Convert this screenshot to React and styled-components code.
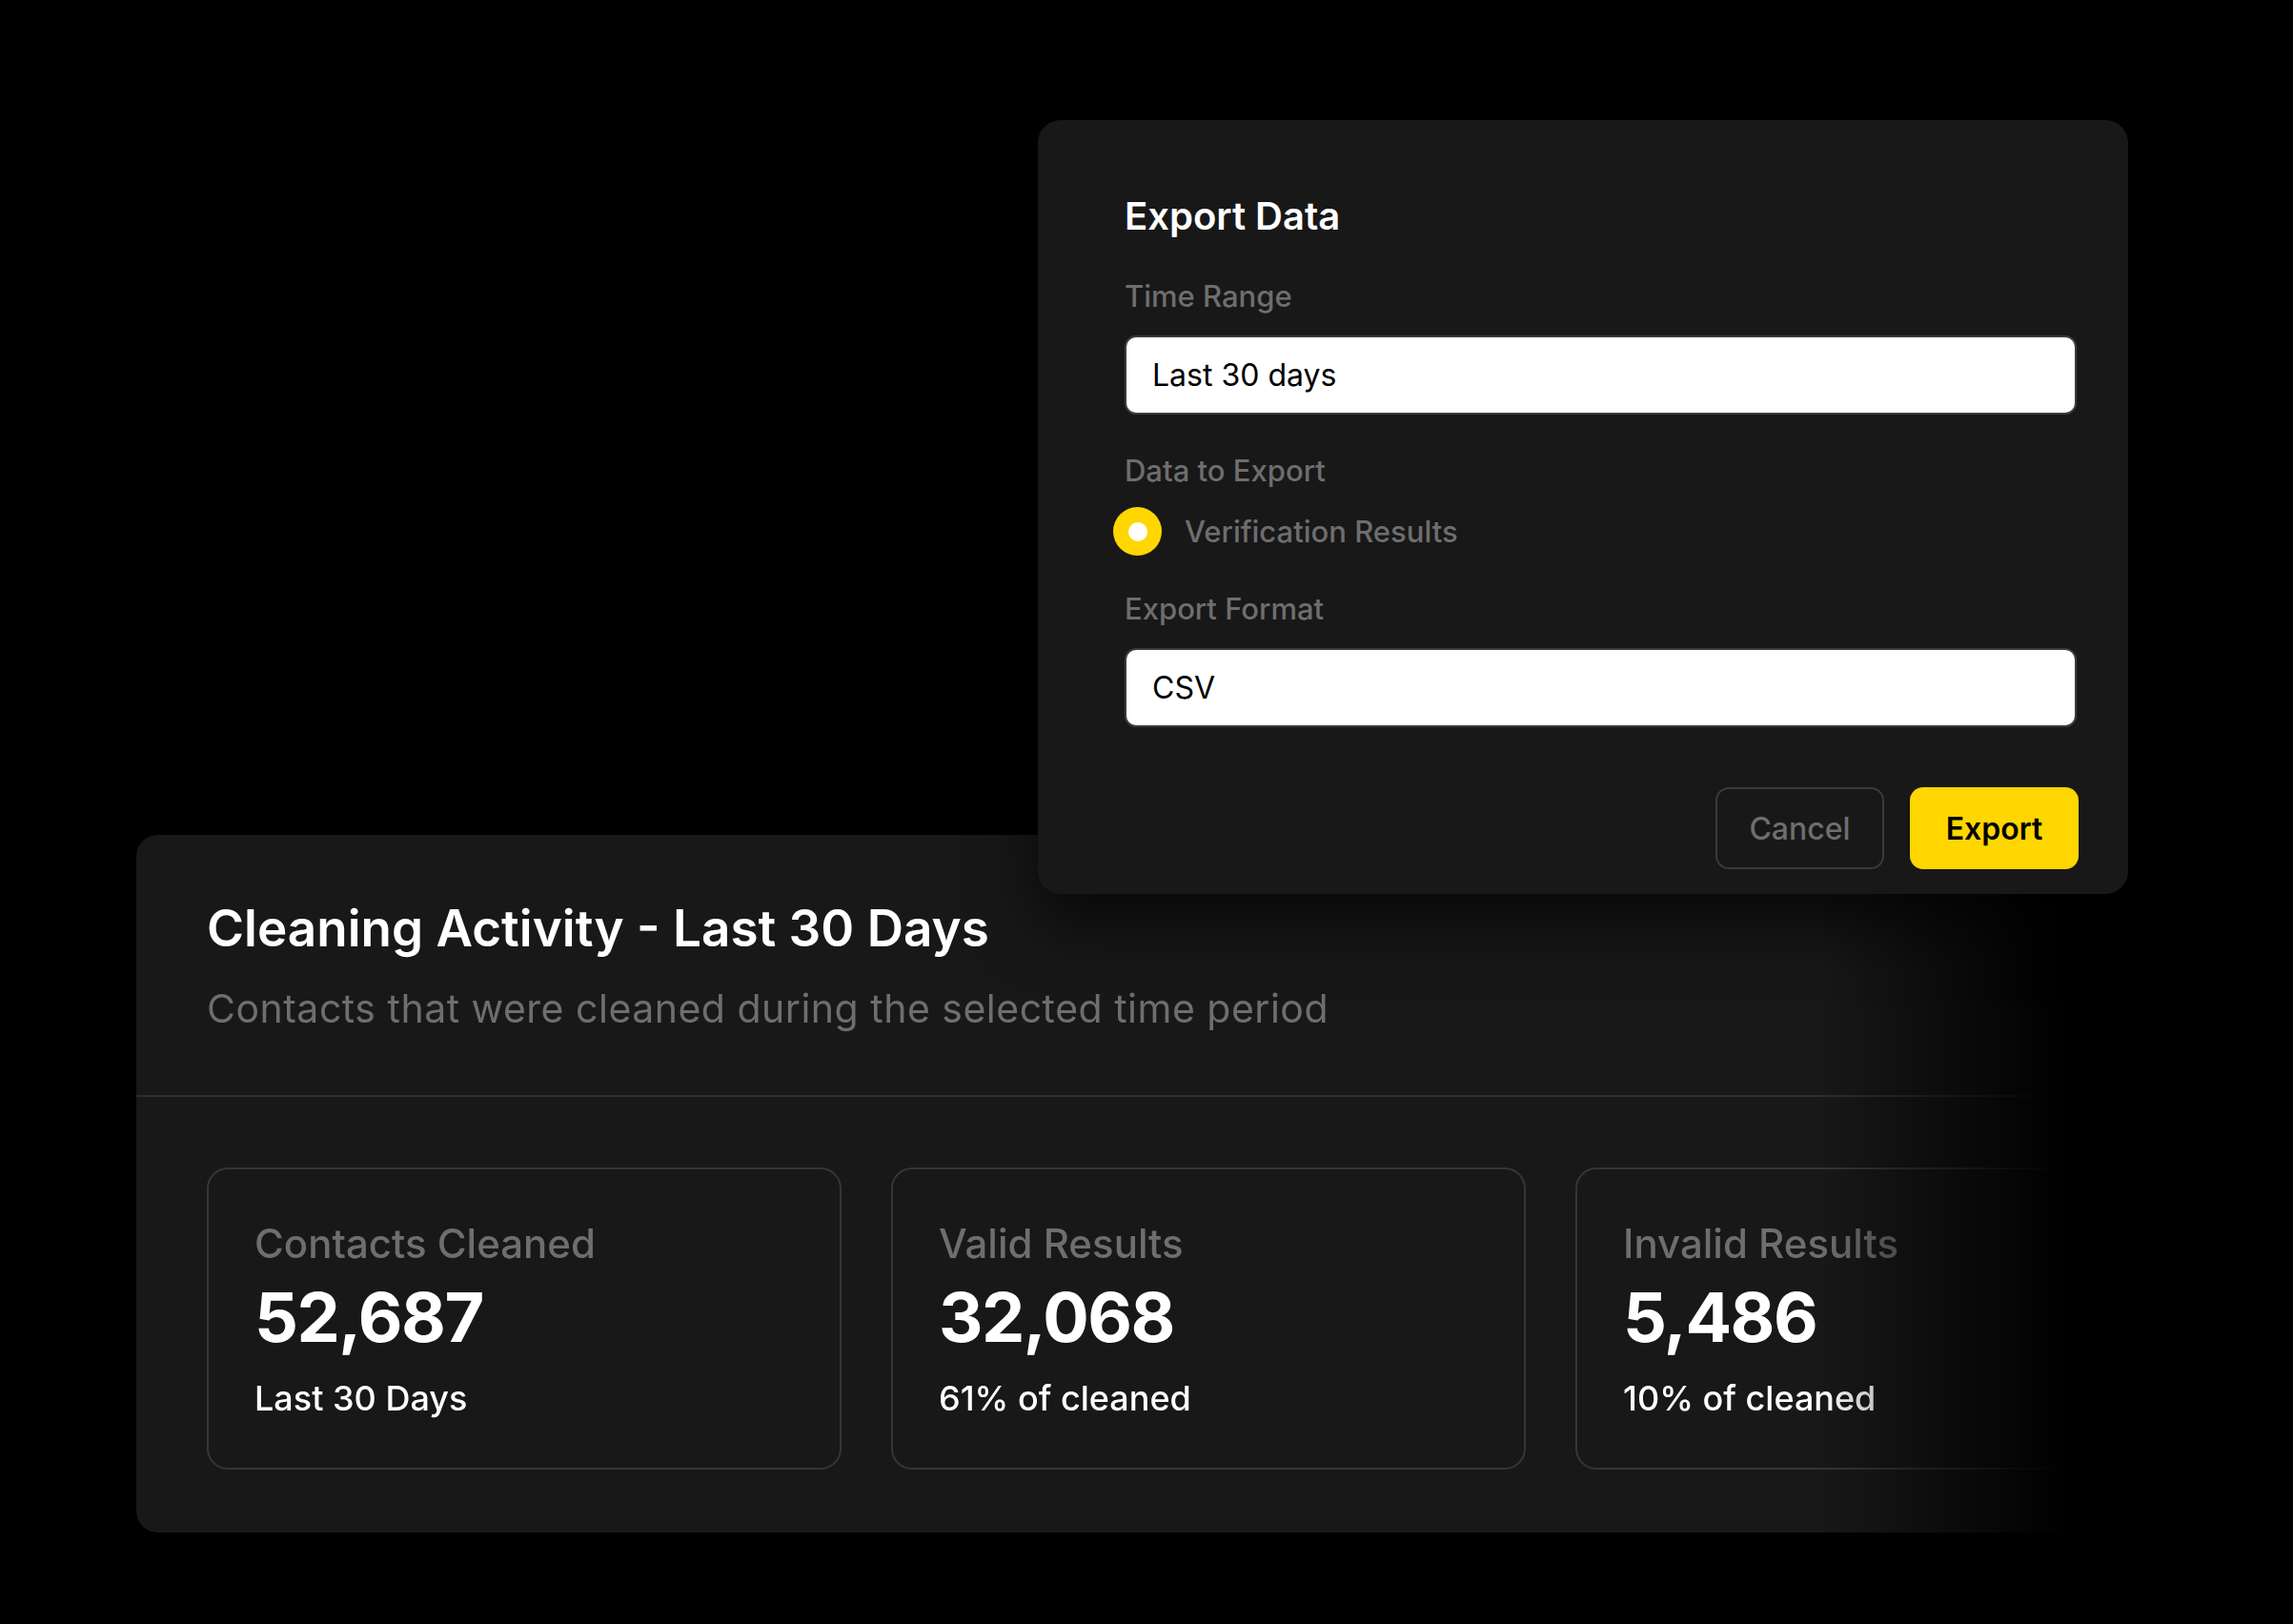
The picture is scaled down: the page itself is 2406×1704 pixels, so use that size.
import React from 'react'
import styled, { createGlobalStyle } from 'styled-components'

const Global = createGlobalStyle`
  html, body {
    margin: 0;
    padding: 0;
    background: #000;
  }
  body {
    font-family: Inter, "Noto Sans", "Liberation Sans", sans-serif;
    -webkit-font-smoothing: antialiased;
  }
`;

const Stage = styled.div`
  position: relative;
  width: 2406px;
  height: 1704px;
  overflow: hidden;
  background: #000;
  padding: 876px 0 0 143px;
  box-sizing: border-box;
`;

/* back panel, fades into black on the right */
const Panel = styled.section`
  width: 2250px;
  height: 732px;
  box-sizing: border-box;
  background: #181818;
  border-radius: 22px;
  -webkit-mask-image: linear-gradient(to right, #000 1765px, transparent 2027px);
  mask-image: linear-gradient(to right, #000 1765px, transparent 2027px);
`;

const PanelHead = styled.header`
  padding: 67px 74px 67px;
  border-bottom: 2px solid #2f2f2f;
`;

const PanelTitle = styled.h2`
  margin: 0;
  font-size: 53px;
  line-height: 62px;
  font-weight: 600;
  color: #fff;
`;

const PanelSub = styled.p`
  margin: 29px 0 0;
  font-size: 41px;
  line-height: 48px;
  font-weight: 400;
  letter-spacing: 0.5px;
  color: #6e6e6e;
`;

const StatRow = styled.div`
  display: flex;
  gap: 52px;
  padding: 74px 74px 66px;
`;

const StatCard = styled.div`
  flex: 0 0 666px;
  height: 317px;
  box-sizing: border-box;
  border: 2px solid #363636;
  border-radius: 22px;
  padding: 53px 48px 0;
  display: flex;
  flex-direction: column;
`;

const StatLabel = styled.div`
  font-size: 42px;
  line-height: 50px;
  font-weight: 500;
  color: #6e6e6e;
`;

const StatValue = styled.div`
  margin-top: 12px;
  font-size: 72px;
  line-height: 80px;
  font-weight: 700;
  color: #fff;
  letter-spacing: -1.5px;
`;

const StatNote = styled.div`
  margin-top: 23px;
  font-size: 36px;
  line-height: 44px;
  font-weight: 500;
  color: #fff;
`;

/* export dialog floating over the panel */
const Dialog = styled.div`
  position: absolute;
  left: 1089px;
  top: 126px;
  width: 1144px;
  height: 812px;
  box-sizing: border-box;
  padding: 77px 54px 0 91px;
  background: #181818;
  border-radius: 24px;
  box-shadow: 0 30px 70px rgba(0, 0, 0, 0.7);
  display: flex;
  flex-direction: column;
`;

const DialogTitle = styled.h3`
  margin: 0;
  font-size: 40px;
  line-height: 48px;
  font-weight: 600;
  color: #fff;
`;

const FieldLabel = styled.div`
  margin-top: ${p => p.$top}px;
  font-size: 31px;
  line-height: 38px;
  font-weight: 500;
  color: #6e6e6e;
`;

const Field = styled.div`
  margin-top: 22px;
  height: 83px;
  box-sizing: border-box;
  border: 2px solid #3c3c3c;
  border-radius: 12px;
  background: #fff;
  display: flex;
  align-items: center;
  padding: 0 27px;
  font-size: 32px;
  font-weight: 400;
  color: #000;
`;

const RadioRow = styled.label`
  margin: 19px 0 0 -12px;
  display: flex;
  align-items: center;
  gap: 24px;
  font-size: 31px;
  font-weight: 500;
  color: #6e6e6e;
`;

const RadioDot = styled.span`
  width: 51px;
  height: 51px;
  border-radius: 50%;
  background: #ffd600;
  display: flex;
  align-items: center;
  justify-content: center;

  &::after {
    content: "";
    width: 20px;
    height: 20px;
    border-radius: 50%;
    background: #fff;
  }
`;

const Actions = styled.div`
  margin: 63px -2px 0 0;
  display: flex;
  justify-content: flex-end;
  gap: 27px;
`;

const Button = styled.button`
  width: 177px;
  height: 86px;
  box-sizing: border-box;
  border-radius: 14px;
  font-family: inherit;
  font-size: 32px;
  cursor: pointer;
  border: ${p => (p.$primary ? 'none' : '2px solid #3a3a3a')};
  background: ${p => (p.$primary ? '#ffd600' : 'transparent')};
  color: ${p => (p.$primary ? '#000' : '#6e6e6e')};
  font-weight: ${p => (p.$primary ? 600 : 500)};
`;

const stats = [
  { label: 'Contacts Cleaned', value: '52,687', note: 'Last 30 Days' },
  { label: 'Valid Results', value: '32,068', note: '61% of cleaned' },
  { label: 'Invalid Results', value: '5,486', note: '10% of cleaned' },
];

const App = () => (
  <>
    <Global />
    <Stage>
      <Panel>
        <PanelHead>
          <PanelTitle>Cleaning Activity - Last 30 Days</PanelTitle>
          <PanelSub>Contacts that were cleaned during the selected time period</PanelSub>
        </PanelHead>
        <StatRow>
          {stats.map(s => (
            <StatCard key={s.label}>
              <StatLabel>{s.label}</StatLabel>
              <StatValue>{s.value}</StatValue>
              <StatNote>{s.note}</StatNote>
            </StatCard>
          ))}
        </StatRow>
      </Panel>

      <Dialog>
        <DialogTitle>Export Data</DialogTitle>
        <FieldLabel $top={41}>Time Range</FieldLabel>
        <Field>Last 30 days</Field>
        <FieldLabel $top={40}>Data to Export</FieldLabel>
        <RadioRow>
          <RadioDot />
          Verification Results
        </RadioRow>
        <FieldLabel $top={37}>Export Format</FieldLabel>
        <Field>CSV</Field>
        <Actions>
          <Button>Cancel</Button>
          <Button $primary>Export</Button>
        </Actions>
      </Dialog>
    </Stage>
  </>
);

export default App
